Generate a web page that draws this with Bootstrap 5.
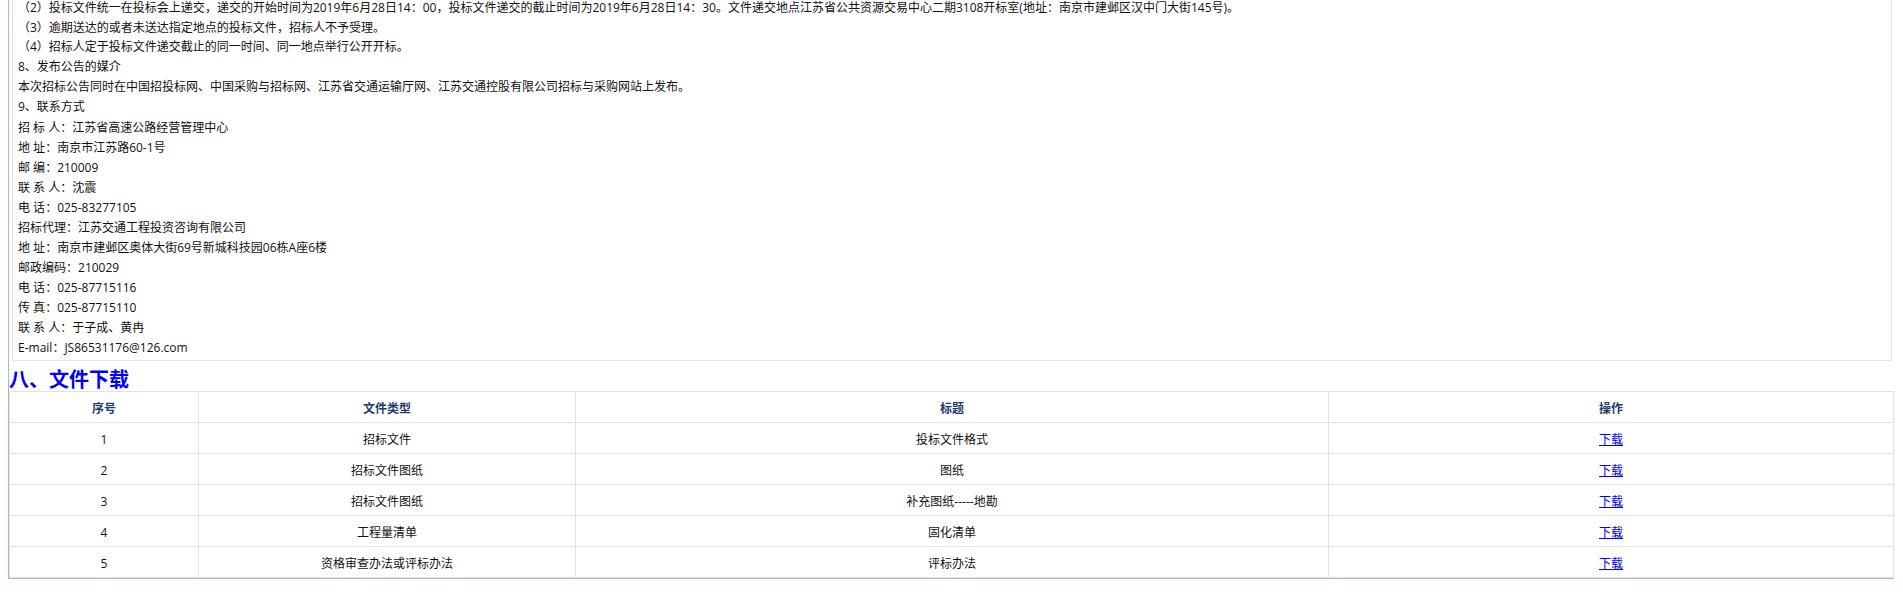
<!DOCTYPE html>
<html lang="zh-CN">
<head>
<meta charset="utf-8">
<title>文件下载</title>
<link href="https://cdn.jsdelivr.net/npm/bootstrap@5.3.0/dist/css/bootstrap.min.css" rel="stylesheet">
<style>
html,body{height:595px;overflow:hidden;background:#fff}
body{font-family:"Open Sans","Noto Sans CJK SC",sans-serif;font-size:12px;color:#111}
.page-frame{margin:0 9px 0 8px;border-left:1px solid #9db9e4;border-bottom:1px solid #9db9e4;height:579px}
.notice-box{display:flow-root;margin:0 2px 0 3px;height:361px;padding:0 5px;border:1px solid #dfe4e8;border-top:0}
.notice-lines{margin-top:-3px}
.notice-lines p{margin:0;line-height:20px;height:20px;white-space:nowrap}
.pc{font-family:"Noto Sans CJK TC",sans-serif}
.sect-title{margin:0;height:30px;line-height:35px;font-size:20px;font-weight:700;color:#00f;font-family:"Noto Sans CJK SC",sans-serif}
.files-table{margin:0;table-layout:fixed;width:100%;height:187px;--bs-table-border-color:#dde3e6;font-size:12px;text-align:center;color:#111}
.files-table th,.files-table td{padding:4px 0 0;vertical-align:middle;height:31px}
.files-table thead th{color:#1f3a6e;font-weight:700}
.files-table a{color:#00f}
.col-no{width:189px}.col-type{width:377px}.col-title{width:753px}
</style>
</head>
<body>
<div class="page-frame">
  <div class="notice-box">
    <div class="notice-lines">
    <p>（2）投标文件统一在投标会上递交<span class="pc">，</span>递交的开始时间为2019年6月28日14<span class="pc">：</span>00<span class="pc">，</span>投标文件递交的截止时间为2019年6月28日14<span class="pc">：</span>30。文件递交地点江苏省公共资源交易中心二期3108开标室(地址<span class="pc">：</span>南京市建邺区汉中门大街145号)。</p>
    <p>（3）逾期送达的或者未送达指定地点的投标文件<span class="pc">，</span>招标人不予受理。</p>
    <p>（4）招标人定于投标文件递交截止的同一时间、同一地点举行公开开标。</p>
    <p>8、发布公告的媒介</p>
    <p>本次招标公告同时在中国招投标网、中国采购与招标网、江苏省交通运输厅网、江苏交通控股有限公司招标与采购网站上发布。</p>
    <p>9、联系方式</p>
    <p>招 标 人<span class="pc">：</span>江苏省高速公路经营管理中心</p>
    <p>地 址<span class="pc">：</span>南京市江苏路60-1号</p>
    <p>邮 编<span class="pc">：</span>210009</p>
    <p>联 系 人<span class="pc">：</span>沈震</p>
    <p>电 话<span class="pc">：</span>025-83277105</p>
    <p>招标代理<span class="pc">：</span>江苏交通工程投资咨询有限公司</p>
    <p>地 址<span class="pc">：</span>南京市建邺区奥体大街69号新城科技园06栋A座6楼</p>
    <p>邮政编码<span class="pc">：</span>210029</p>
    <p>电 话<span class="pc">：</span>025-87715116</p>
    <p>传 真<span class="pc">：</span>025-87715110</p>
    <p>联 系 人<span class="pc">：</span>于子成、黄冉</p>
    <p>E-mail<span class="pc">：</span>JS86531176@126.com</p>
    </div>
  </div>
  <h2 class="sect-title">八、文件下载</h2>
  <table class="table table-bordered files-table">
    <colgroup><col class="col-no"><col class="col-type"><col class="col-title"><col></colgroup>
    <thead><tr><th>序号</th><th>文件类型</th><th>标题</th><th>操作</th></tr></thead>
    <tbody>
      <tr><td>1</td><td>招标文件</td><td>投标文件格式</td><td><a href="#">下载</a></td></tr>
      <tr><td>2</td><td>招标文件图纸</td><td>图纸</td><td><a href="#">下载</a></td></tr>
      <tr><td>3</td><td>招标文件图纸</td><td>补充图纸-----地勘</td><td><a href="#">下载</a></td></tr>
      <tr><td>4</td><td>工程量清单</td><td>固化清单</td><td><a href="#">下载</a></td></tr>
      <tr><td>5</td><td>资格审查办法或评标办法</td><td>评标办法</td><td><a href="#">下载</a></td></tr>
    </tbody>
  </table>
</div>
<script src="https://cdn.jsdelivr.net/npm/bootstrap@5.3.0/dist/js/bootstrap.bundle.min.js"></script>
</body>
</html>
